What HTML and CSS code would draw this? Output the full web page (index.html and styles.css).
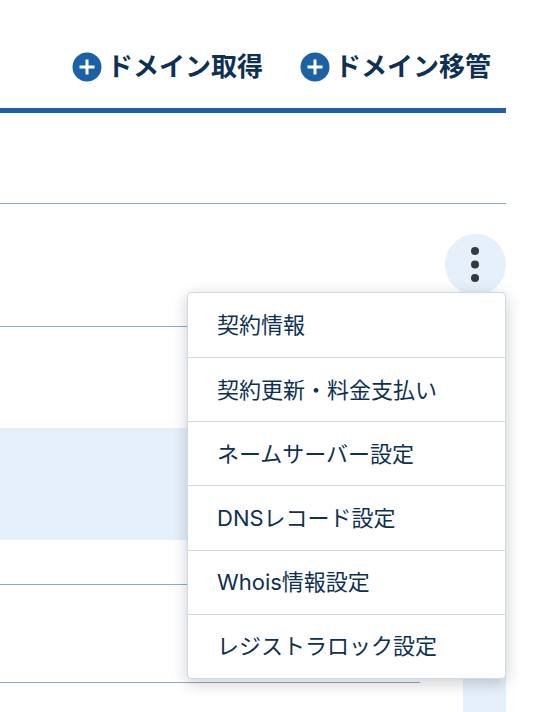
FILE: index.html
```html
<!DOCTYPE html>
<html lang="ja">

<head>
    <meta charset="UTF-8">
    <meta name="viewport" content="width=device-width, initial-scale=1.0">
    <title>ドメイン一覧</title>
    <link rel="stylesheet" href="styles.css">
</head>

<body>
    <header class="header">
        <a class="header-link" href="#">
            <svg viewBox="0 0 30 30">
                <circle cx="15" cy="15" r="14.5" fill="#1c61a6" />
                <path d="M15 7.5v15M7.5 15h15" stroke="#fff" stroke-width="3" />
            </svg>
            ドメイン取得
        </a>
        <a class="header-link" href="#">
            <svg viewBox="0 0 30 30">
                <circle cx="15" cy="15" r="14.5" fill="#1c61a6" />
                <path d="M15 7.5v15M7.5 15h15" stroke="#fff" stroke-width="3" />
            </svg>
            ドメイン移管
        </a>
    </header>

    <main>
        <div class="row row-head"></div>
        <div class="row row-actions">
            <div class="actions">
                <button class="more-btn" type="button" aria-label="メニュー">
                    <svg viewBox="0 0 61 61">
                        <circle cx="30" cy="17" r="4" />
                        <circle cx="30" cy="30.5" r="4" />
                        <circle cx="30" cy="44" r="4" />
                    </svg>
                </button>
                <nav class="menu">
                    <a href="#">契約情報</a>
                    <a href="#">契約更新・料金支払い</a>
                    <a href="#">ネームサーバー設定</a>
                    <a href="#">DNSレコード設定</a>
                    <a href="#">Whois情報設定</a>
                    <a href="#">レジストラロック設定</a>
                </nav>
            </div>
        </div>
        <div class="panel"></div>
        <div class="row row-small"></div>
        <div class="bottom">
            <div class="bottom-main"></div>
            <div class="bottom-side"></div>
        </div>
    </main>
</body>

</html>
```

FILE: styles.css
```css
* {
    box-sizing: border-box;
}

body {
    margin: 0;
    padding-right: 42px;
    background: #fff;
    color: #0e3052;
    font-family: Inter, "Noto Sans CJK JP", sans-serif;
}

a {
    color: inherit;
    text-decoration: none;
}

.header {
    display: flex;
    justify-content: flex-end;
    align-items: center;
    gap: 37px;
    height: 113px;
    padding: 26px 15px 0 0;
    border-bottom: 5px solid #1c61a6;
}

.header-link {
    display: flex;
    align-items: center;
    gap: 5px;
    font-size: 26px;
    line-height: 36px;
    font-weight: bold;
    white-space: nowrap;
}

.header-link svg {
    width: 30px;
    height: 30px;
}

.row {
    border-bottom: 1px solid #8fabc9;
}

.row-head {
    height: 91px;
}

.row-actions {
    display: flex;
    justify-content: flex-end;
    height: 123px;
    padding-top: 30px;
}

.actions {
    position: relative;
    width: 61px;
    height: 61px;
}

.more-btn {
    width: 61px;
    height: 61px;
    padding: 0;
    border: none;
    border-radius: 50%;
    background: #e5f0fa;
    cursor: pointer;
}

.more-btn svg {
    display: block;
    fill: #343a42;
}

.menu {
    position: absolute;
    top: 58px;
    right: 0;
    z-index: 1;
    display: grid;
    grid-auto-rows: 1fr;
    width: 319px;
    min-height: 387px;
    background: #fff;
    border: 1px solid #cbdbe8;
    border-radius: 4px;
    box-shadow: 0 4px 16px rgba(0, 0, 0, 0.2);
}

.menu a {
    display: flex;
    align-items: center;
    padding-left: 29px;
    font-size: 22px;
    line-height: 32px;
}

.menu a + a {
    border-top: 1px solid #cbdbe8;
}

.panel {
    height: 112px;
    margin-top: 101px;
    background: #e5f0fa;
}

.row-small {
    height: 45px;
    width: 83%;
}

.bottom {
    display: flex;
    gap: 43px;
}

.bottom-main {
    flex: 1;
    height: 98px;
    border-bottom: 1px solid #8fabc9;
}

.bottom-side {
    width: 43px;
    height: 127px;
    background: #e5f0fa;
}
```
